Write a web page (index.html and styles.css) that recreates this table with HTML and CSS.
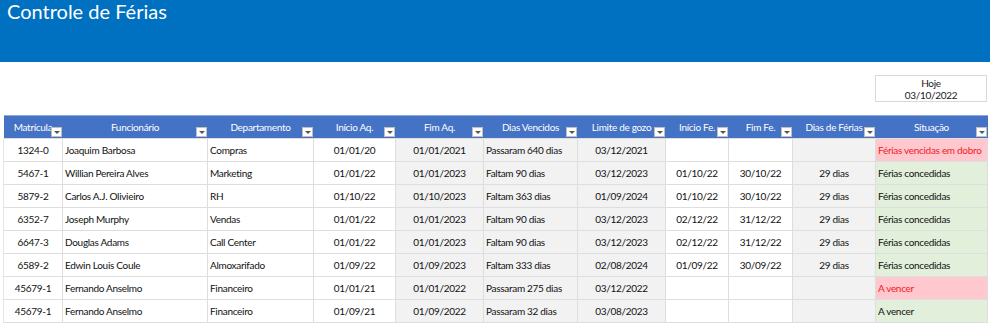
FILE: index.html
```html
<!DOCTYPE html>
<html lang="pt-BR">
<head>
<meta charset="utf-8">
<title>Controle de Férias</title>
<link rel="stylesheet" href="styles.css">
</head>
<body>
<header class="banner"><h1 class="title">Controle de Férias</h1></header>
<div class="today-row">
  <div class="today-box">
    <div>Hoje</div>
    <div>03/10/2022</div>
  </div>
</div>
<table class="grid">
  <colgroup>
    <col class="w-mat"><col class="w-func"><col class="w-dep"><col class="w-iaq"><col class="w-faq"><col class="w-dv"><col class="w-lim"><col class="w-ife"><col class="w-ffe"><col class="w-df"><col class="w-sit">
  </colgroup>
  <thead>
    <tr>
      <th>Matrícula<span class="dd"></span></th>
      <th>Funcionário<span class="dd"></span></th>
      <th>Departamento<span class="dd"></span></th>
      <th>Início Aq.<span class="dd"></span></th>
      <th>Fim Aq.<span class="dd"></span></th>
      <th>Dias Vencidos<span class="dd"></span></th>
      <th>Limite de gozo<span class="dd"></span></th>
      <th>Início Fe.<span class="dd"></span></th>
      <th>Fim Fe.<span class="dd"></span></th>
      <th>Dias de Férias<span class="dd"></span></th>
      <th>Situação<span class="dd"></span></th>
    </tr>
  </thead>
  <tbody>
    <tr>
      <td class="c">1324-0</td><td>Joaquim Barbosa</td><td>Compras</td><td class="c">01/01/20</td><td class="c g">01/01/2021</td><td class="g">Passaram 640 dias</td><td class="c g">03/12/2021</td><td class="c"></td><td class="c"></td><td class="c g"></td><td class="bad">Férias vencidas em dobro</td>
    </tr>
    <tr>
      <td class="c">5467-1</td><td>Willian Pereira Alves</td><td>Marketing</td><td class="c">01/01/22</td><td class="c g">01/01/2023</td><td class="g">Faltam 90 dias</td><td class="c g">03/12/2023</td><td class="c">01/10/22</td><td class="c">30/10/22</td><td class="c g">29 dias</td><td class="ok">Férias concedidas</td>
    </tr>
    <tr>
      <td class="c">5879-2</td><td>Carlos A.J. Olivieiro</td><td>RH</td><td class="c">01/10/22</td><td class="c g">01/10/2023</td><td class="g">Faltam 363 dias</td><td class="c g">01/09/2024</td><td class="c">01/10/22</td><td class="c">30/10/22</td><td class="c g">29 dias</td><td class="ok">Férias concedidas</td>
    </tr>
    <tr>
      <td class="c">6352-7</td><td>Joseph Murphy</td><td>Vendas</td><td class="c">01/01/22</td><td class="c g">01/01/2023</td><td class="g">Faltam 90 dias</td><td class="c g">03/12/2023</td><td class="c">02/12/22</td><td class="c">31/12/22</td><td class="c g">29 dias</td><td class="ok">Férias concedidas</td>
    </tr>
    <tr>
      <td class="c">6647-3</td><td>Douglas Adams</td><td>Call Center</td><td class="c">01/01/22</td><td class="c g">01/01/2023</td><td class="g">Faltam 90 dias</td><td class="c g">03/12/2023</td><td class="c">02/12/22</td><td class="c">31/12/22</td><td class="c g">29 dias</td><td class="ok">Férias concedidas</td>
    </tr>
    <tr>
      <td class="c">6589-2</td><td>Edwin Louis Coule</td><td>Almoxarifado</td><td class="c">01/09/22</td><td class="c g">01/09/2023</td><td class="g">Faltam 333 dias</td><td class="c g">02/08/2024</td><td class="c">01/09/22</td><td class="c">30/09/22</td><td class="c g">29 dias</td><td class="ok">Férias concedidas</td>
    </tr>
    <tr>
      <td class="c">45679-1</td><td>Fernando Anselmo</td><td>Financeiro</td><td class="c">01/01/21</td><td class="c g">01/01/2022</td><td class="g">Passaram 275 dias</td><td class="c g">03/12/2022</td><td class="c"></td><td class="c"></td><td class="c g"></td><td class="bad">A vencer</td>
    </tr>
    <tr>
      <td class="c">45679-1</td><td>Fernando Anselmo</td><td>Financeiro</td><td class="c">01/09/21</td><td class="c g">01/09/2022</td><td class="g">Passaram 32 dias</td><td class="c g">03/08/2023</td><td class="c"></td><td class="c"></td><td class="c g"></td><td class="ok">A vencer</td>
    </tr>
  </tbody>
</table>
</body>
</html>
```
FILE: styles.css
```css
* { box-sizing: border-box; }
html, body { margin: 0; padding: 0; background: #ffffff; }
body {
  font-family: Lato, "Liberation Sans", sans-serif;
  font-size: 10px;
  letter-spacing: -0.3px;
  color: #111111;
  width: 990px;
  height: 324px;
  overflow: hidden;
}
.banner {
  height: 62px;
  background: #0070c0;
  padding: 0 0 0 7px;
}
.title {
  margin: 0;
  font-weight: 400;
  font-size: 20px;
  letter-spacing: 0;
  line-height: 22px;
  color: #ffffff;
}
.today-row {
  display: flex;
  justify-content: flex-end;
  padding: 13px 3px 0 0;
}
.today-box {
  width: 112px;
  height: 27px;
  border: 1px solid #d9d9d9;
  display: flex;
  flex-direction: column;
  align-items: center;
  justify-content: center;
  line-height: 12px;
  color: #1a1a1a;
}
.grid {
  margin: 13px 0 0 3px;
  width: 984px;
  table-layout: fixed;
  border-collapse: collapse;
}
.w-mat { width: 59px; }
.w-func { width: 145px; }
.w-dep { width: 106px; }
.w-iaq { width: 82px; }
.w-faq { width: 88px; }
.w-dv { width: 94px; }
.w-lim { width: 88px; }
.w-ife { width: 63px; }
.w-ffe { width: 64px; }
.w-df { width: 83px; }
.w-sit { width: 112px; }
.grid th {
  position: relative;
  height: 23px;
  background: #4472c4;
  color: #ffffff;
  font-weight: 400;
  text-align: center;
  padding: 0 0 1px 0;
  border-top: 1px solid #8eaadb;
  white-space: nowrap;
  overflow: visible;
}
.dd {
  position: absolute;
  right: 1px;
  bottom: 1px;
  width: 11px;
  height: 10px;
  background: #ffffff;
  border: 1px solid #bfbfbf;
}
.dd::after {
  content: "";
  position: absolute;
  left: 2px;
  top: 3px;
  border-left: 3px solid transparent;
  border-right: 3px solid transparent;
  border-top: 3px solid #555555;
}
.grid td {
  height: 23px;
  padding: 0 2px;
  border: 1px solid #dedede;
  white-space: nowrap;
  overflow: hidden;
  background: #ffffff;
}
.grid td.c { text-align: center; }
.grid td.g { background: #f2f2f2; }
.grid td.ok { background: #e2efda; }
.grid td.bad { background: #ffc7ce; color: #f21c24; }
.grid tr > td:first-child { border-left: 1px solid #e6e6e6; }
```
